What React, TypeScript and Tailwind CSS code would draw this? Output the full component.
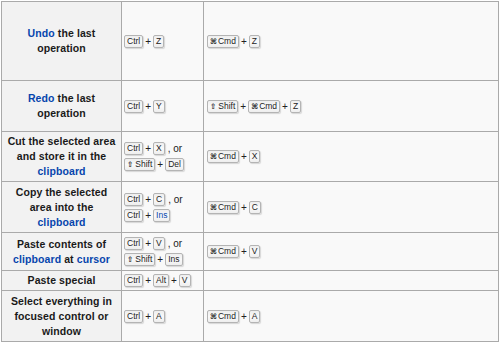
import React from "react";

const Key = ({ children, blue }: { children: React.ReactNode; blue?: boolean }) => (
	<span
		className={
			"inline-block align-middle h-[13px] px-[2px] border border-[#b4b4b4] rounded-[2px] bg-[linear-gradient(#eeeeee,#f9f9f9,#eeeeee)] shadow-[1px_1px_1px_#d6d6d6] text-[8.5px] leading-[11px] font-normal " +
			(blue ? "text-[#0645ad]" : "text-[#222]")
		}
	>
		{children}
	</span>
);

const Plus = () => <span className="inline-block align-middle mx-[2px] text-[10px] leading-[11px] text-[#222]">+</span>;

const Or = () => <span className="inline-block align-middle ml-[3px] text-[10px] leading-[11px] text-[#222]">, or</span>;

const Cmd = () => (
	<Key>
		<span className="text-[7.5px] font-bold font-['DejaVu_Sans',sans-serif] mr-px">⌘</span>Cmd
	</Key>
);

const Shift = () => (
	<Key>
		<span className="text-[7.5px] font-bold font-['DejaVu_Sans',sans-serif] mr-[2px]">⇧</span>Shift
	</Key>
);

const A = ({ children }: { children: React.ReactNode }) => <span className="text-[#0645ad]">{children}</span>;

const rows = [
	{
		h: "h-[79px]",
		label: (
			<>
				<A>Undo</A> the last operation
			</>
		),
		win: (
			<div>
				<Key>Ctrl</Key>
				<Plus />
				<Key>Z</Key>
			</div>
		),
		mac: (
			<div>
				<Cmd />
				<Plus />
				<Key>Z</Key>
			</div>
		),
	},
	{
		h: "h-[51px]",
		label: (
			<>
				<A>Redo</A> the last operation
			</>
		),
		win: (
			<div>
				<Key>Ctrl</Key>
				<Plus />
				<Key>Y</Key>
			</div>
		),
		mac: (
			<div>
				<Shift />
				<Plus />
				<Cmd />
				<Plus />
				<Key>Z</Key>
			</div>
		),
	},
	{
		h: "h-[50px]",
		label: (
			<>
				Cut the selected area and store it in the <A>clipboard</A>
			</>
		),
		win: (
			<div>
				<div>
					<Key>Ctrl</Key>
					<Plus />
					<Key>X</Key>
					<Or />
				</div>
				<div>
					<Shift />
					<Plus />
					<Key>Del</Key>
				</div>
			</div>
		),
		mac: (
			<div>
				<Cmd />
				<Plus />
				<Key>X</Key>
			</div>
		),
	},
	{
		h: "h-[51px]",
		label: (
			<>
				Copy the selected area into the <A>clipboard</A>
			</>
		),
		win: (
			<div>
				<div>
					<Key>Ctrl</Key>
					<Plus />
					<Key>C</Key>
					<Or />
				</div>
				<div>
					<Key>Ctrl</Key>
					<Plus />
					<Key blue>Ins</Key>
				</div>
			</div>
		),
		mac: (
			<div>
				<Cmd />
				<Plus />
				<Key>C</Key>
			</div>
		),
	},
	{
		h: "h-[38px]",
		label: (
			<>
				Paste contents of <A>clipboard</A> at <A>cursor</A>
			</>
		),
		win: (
			<div>
				<div>
					<Key>Ctrl</Key>
					<Plus />
					<Key>V</Key>
					<Or />
				</div>
				<div>
					<Shift />
					<Plus />
					<Key>Ins</Key>
				</div>
			</div>
		),
		mac: (
			<div>
				<Cmd />
				<Plus />
				<Key>V</Key>
			</div>
		),
	},
	{
		h: "h-[20px]",
		label: <>Paste special</>,
		win: (
			<div>
				<Key>Ctrl</Key>
				<Plus />
				<Key>Alt</Key>
				<Plus />
				<Key>V</Key>
			</div>
		),
		mac: null,
	},
	{
		h: "h-[51px]",
		label: <>Select everything in focused control or window</>,
		win: (
			<div>
				<Key>Ctrl</Key>
				<Plus />
				<Key>A</Key>
			</div>
		),
		mac: (
			<div>
				<Cmd />
				<Plus />
				<Key>A</Key>
			</div>
		),
	},
];

export default function App() {
	return (
		<div className="w-[500px] h-[343px] bg-white pl-px pt-px font-['Liberation_Sans',Arial,sans-serif]">
			<div className="w-[498px] grid grid-cols-[120px_82px_295px] border-l border-t border-[#aaaaaa]">
				{rows.map((row, i) => (
					<React.Fragment key={i}>
						<div
							className={
								row.h +
								" flex items-center justify-center px-[4px] bg-[#f2f2f2] border-r border-b border-[#aaaaaa] text-center text-[10.5px] leading-[15px] font-bold text-[#1a1a1a] tracking-[0.1px]"
							}
						>
							<div>{row.label}</div>
						</div>
						<div className={row.h + " flex items-center pl-[2px] bg-[#f9f9f9] border-r border-b border-[#aaaaaa] whitespace-nowrap text-[10px] leading-[16px]"}>
							{row.win}
						</div>
						<div className={row.h + " flex items-center pl-[3px] bg-[#f9f9f9] border-r border-b border-[#aaaaaa] whitespace-nowrap text-[10px] leading-[16px]"}>
							{row.mac}
						</div>
					</React.Fragment>
				))}
			</div>
		</div>
	);
}
